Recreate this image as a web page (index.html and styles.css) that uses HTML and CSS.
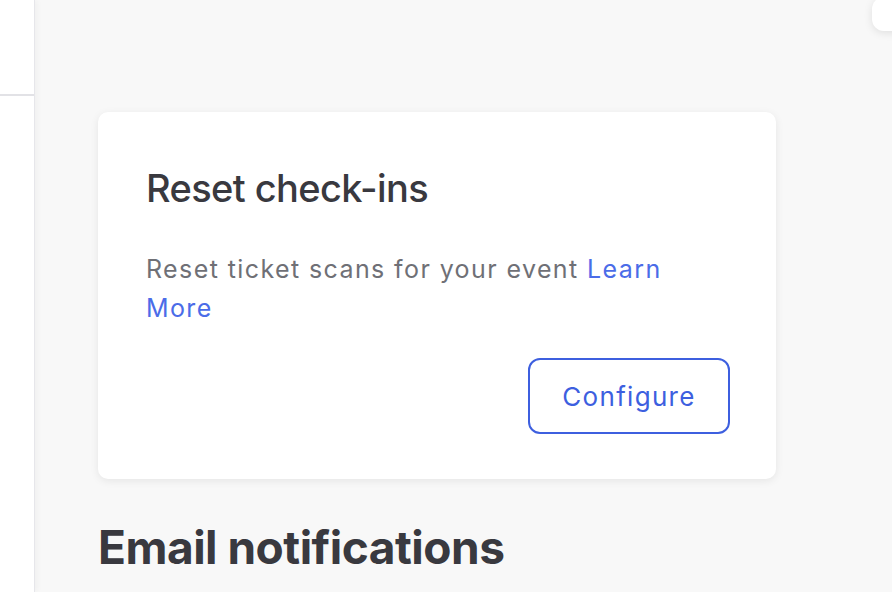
FILE: index.html
```html
<!DOCTYPE html>
<html>
<head>
<meta charset="utf-8">
<link rel="stylesheet" href="styles.css">
</head>
<body>
<div class="app">
  <aside class="sidebar">
    <div class="sidebar-top"></div>
  </aside>
  <main class="main">
    <div class="topbar"><div class="top-card"></div></div>
    <section class="card">
      <h2 class="card-title">Reset check-ins</h2>
      <p class="card-text">Reset ticket scans for your event <a class="link" href="#">Learn More</a></p>
      <div class="card-actions">
        <button class="btn">Configure</button>
      </div>
    </section>
    <h1 class="section-title">Email notifications</h1>
  </main>
</div>
</body>
</html>
```
FILE: styles.css
```css
* { box-sizing: border-box; }
html, body { margin: 0; padding: 0; height: 100%; overflow: hidden; }
body { font-family: "Inter", "Noto Sans", sans-serif; background: #f8f8f8; }
.app { display: flex; height: 592px; }
.sidebar {
  width: 35px; flex: 0 0 35px; background: #fff;
  border-right: 1px solid #e6e6ea;
  box-shadow: 2px 0 6px rgba(0,0,0,0.04);
  position: relative; z-index: 1;
}
.sidebar-top { height: 96px; border-bottom: 2px solid #e2e2e6; }
.main { flex: 1; background: #f8f8f8; padding: 0 0 0 63px; }
.topbar { height: 0; display: flex; justify-content: flex-end; }
.top-card {
  width: 40px; height: 34px; margin-top: -3px; margin-right: -20px;
  background: #fff; border-radius: 12px;
  box-shadow: 0 2px 8px rgba(0,0,0,0.10);
}
.card {
  margin-top: 112px; width: 678px; background: #fff; border-radius: 10px;
  box-shadow: 0 2px 8px rgba(0,0,0,0.08);
  padding: 52px 46px 45px 48px;
}
.card-title {
  margin: 0; font-size: 38px; line-height: 48px; font-weight: 500;
  color: #39393f; letter-spacing: -0.6px;
}
.card-text {
  margin: 38px 0 0; font-size: 25px; line-height: 39px; color: #6f7076;
  letter-spacing: 1.4px; padding-right: 4px;
}
.link { color: #4b6ce8; text-decoration: none; }
.card-actions { display: flex; justify-content: flex-end; margin-top: 30px; }
.btn {
  font-family: inherit; font-size: 26px; color: #3d5fdf; background: #fff;
  border: 2px solid #3d5fdf; border-radius: 12px;
  width: 202px; height: 76px; padding: 0; letter-spacing: 1.3px;
}
.section-title {
  margin: 40px 0 0; font-size: 46px; line-height: 56px; font-weight: 700;
  color: #39393f; letter-spacing: -0.5px;
}
```
